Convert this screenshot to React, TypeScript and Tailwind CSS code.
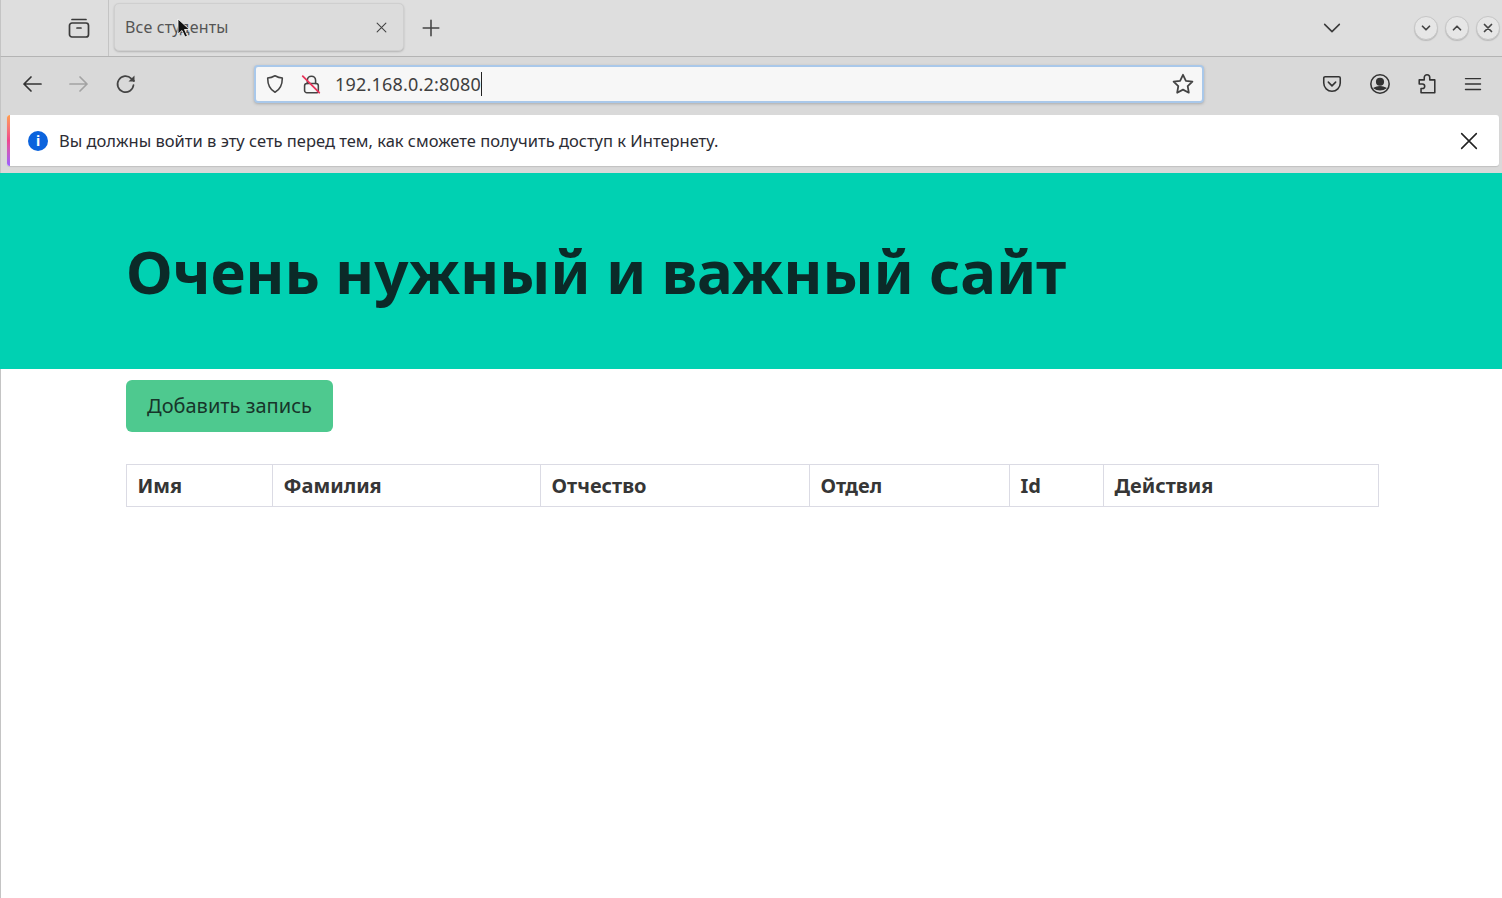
const ui = { fontFamily: '"Noto Sans", sans-serif' };

function Ic({ children, className = "" }: { children: React.ReactNode; className?: string }) {
  return (
    <svg viewBox="0 0 24 24" fill="none" stroke="currentColor" strokeWidth="1.7" strokeLinecap="round" strokeLinejoin="round" className={className}>
      {children}
    </svg>
  );
}

function WinBtn({ children }: { children: React.ReactNode }) {
  return (
    <div className="w-[24px] h-[24px] rounded-full bg-[#e6e6e6] border border-[#c6c6c6] shadow-[0_1px_1px_#bbb] flex items-center justify-center text-[#444]">
      {children}
    </div>
  );
}

const cols: [string, string][] = [
  ["Имя", "w-[146px]"],
  ["Фамилия", "w-[268px]"],
  ["Отчество", "w-[269px]"],
  ["Отдел", "w-[200px]"],
  ["Id", "w-[94px]"],
  ["Действия", "flex-1"],
];

export default function App() {
  return (
    <div className="relative w-[1502px] h-[898px] overflow-hidden bg-white flex flex-col" style={ui}>
      {/* tab strip */}
      <div className="h-[57px] bg-[#dedede] border-l border-l-[#c4c4c4] border-b border-b-[#b4b4b4] flex items-center">
        <div className="w-[108px] h-full border-r border-[#c4c4c4] flex items-center justify-end pr-[17px] text-[#3a3a3a]">
          <Ic className="w-[24px] h-[24px]">
            <rect x="2.5" y="7" width="19" height="14" rx="2.5" />
            <path d="M5 3.5h14M10 12h4" />
          </Ic>
        </div>
        <div className="ml-[5px] mb-[2px] w-[290px] h-[48px] rounded-[5px] bg-[#dcdcdc] border border-[#cfcfcf] shadow-[0_1px_2px_#b4b4b4] flex items-center pl-[10px] pr-[14px]">
          <span className="text-[16px] tracking-[0.15px] text-[#555] flex-1">Все студенты</span>
          <Ic className="w-[15px] h-[15px] text-[#444]"><path d="M5 5l14 14M19 5L5 19" /></Ic>
        </div>
        <Ic className="ml-[16px] w-[22px] h-[22px] text-[#444]"><path d="M12 3.5v17M3.5 12h17" /></Ic>
        <div className="flex-1" />
        <Ic className="w-[22px] h-[22px] text-[#3a3a3a] mr-[71px]"><path d="M4 8l8 8 8-8" /></Ic>
        <div className="flex gap-[7px] mr-[2px]">
          <WinBtn><Ic className="w-[14px] h-[14px]"><path d="M6 9l6 6 6-6" strokeWidth="3" /></Ic></WinBtn>
          <WinBtn><Ic className="w-[14px] h-[14px]"><path d="M6 15l6-6 6 6" strokeWidth="3" /></Ic></WinBtn>
          <WinBtn><Ic className="w-[14px] h-[14px]"><path d="M6 6l12 12M18 6L6 18" strokeWidth="3" /></Ic></WinBtn>
        </div>
      </div>

      {/* nav bar */}
      <div className="h-[54px] bg-[#d9d9d9] border-l border-[#c4c4c4] flex items-center">
        <Ic className="ml-[19px] w-[24px] h-[24px] text-[#333]"><path d="M21 12H4M11 5l-7 7 7 7" /></Ic>
        <Ic className="ml-[23px] w-[24px] h-[24px] text-[#a3a3a3]"><path d="M3 12h17M13 5l7 7-7 7" /></Ic>
        <Ic className="ml-[23px] w-[24px] h-[24px] text-[#444]">
          <path d="M19.5 13a8 8 0 1 1-2.2-6.4L20 9" />
          <path d="M20.5 3.5V9.5H14.5" fill="currentColor" stroke="none" />
        </Ic>
        <div className="ml-[116px] w-[950px] h-[38px] rounded-[4px] bg-[#f7f7f7] border-2 border-[#a9c8ea] shadow-[0_1px_3px_#aaa] flex items-center pl-[8px] pr-[7px]">
          <Ic className="w-[22px] h-[22px] text-[#444]">
            <path d="M12 3c3 1.6 5.6 2.3 8 2.5 0 7.5-2.5 12.7-8 15.5C6.500 18.200 4 13 4 5.500 6.400 5.300 9 4.600 12 3z" />
          </Ic>
          <svg viewBox="0 0 24 24" fill="none" className="ml-[14px] w-[22px] h-[22px]" strokeWidth="1.7" strokeLinecap="round">
            <rect x="5" y="11.500" width="15" height="10" rx="2.500" stroke="#444" />
            <path d="M8 11.500V8a4.500 4.500 0 0 1 9 0v3.500" stroke="#444" />
            <path d="M3 3.500l18 18" stroke="#e8345a" strokeWidth="2" />
          </svg>
          <span className="ml-[13px] text-[18px] tracking-[0.2px] text-[#3f3f3f] leading-none">192.168.0.2:8080</span>
          <span className="w-px h-[24px] bg-[#222]" />
          <div className="flex-1" />
          <svg viewBox="0 0 24 24" fill="none" stroke="#444" strokeWidth="1.800" strokeLinejoin="round" className="w-[24px] h-[24px]">
            <path d="M12 2.800l2.900 6 6.500.9-4.700 4.500 1.100 6.500-5.800-3.100-5.800 3.100 1.100-6.500-4.700-4.500 6.500-.9z" />
          </svg>
        </div>
        <div className="flex-1" />
        <Ic className="w-[22px] h-[22px] text-[#333] mr-[26px]">
          <path d="M4.500 4h15A1.500 1.500 0 0 1 21 5.500V11a9 9 0 0 1-18 0V5.500A1.500 1.500 0 0 1 4.500 4z" />
          <path d="M8 10l4 4 4-4" />
        </Ic>
        <svg viewBox="0 0 24 24" fill="none" stroke="#333" strokeWidth="1.700" className="w-[22px] h-[22px] mr-[25px]">
          <circle cx="12" cy="12" r="10" />
          <circle cx="12" cy="9.500" r="3.600" fill="#333" />
          <path d="M6 16.500c3-2 9-2 12 0-3 2.400-9 2.400-12 0z" fill="#333" />
        </svg>
        <Ic className="w-[22px] h-[22px] text-[#333] mr-[25px]">
          <path d="M9 7.500V5a3 3 0 0 1 6 0v2.500h5.500v14h-15V17H7a2.500 2.500 0 0 0 0-5H3.500V7.500z" />
        </Ic>
        <Ic className="w-[20px] h-[20px] text-[#333] mr-[19px]"><path d="M3 5.500h18M3 12h18M3 18.500h18" /></Ic>
      </div>

      {/* notification */}
      <div className="h-[62px] bg-[#d9d9d9] border-l border-[#c4c4c4] pt-[4px] pl-[6px] pr-[3px]">
        <div className="relative h-[51px] bg-white rounded-[3px] shadow-[0_1px_1px_#c0c0c0] flex items-center overflow-hidden">
          <div className="w-[3px] h-full bg-gradient-to-b from-[#ff9d4d] via-[#f0468c] to-[#9b5cff]" />
          <div className="ml-[18px] w-[20px] h-[20px] rounded-full bg-[#0b63dd] text-white flex items-center justify-center text-[14px] font-bold leading-none">i</div>
          <span className="ml-[11px] pt-[2px] text-[16.5px] text-[#2c2c34]">Вы должны войти в эту сеть перед тем, как сможете получить доступ к Интернету.</span>
          <div className="flex-1" />
          <Ic className="w-[22px] h-[22px] text-[#222] mr-[19px]"><path d="M4 4l16 16M20 4L4 20" /></Ic>
        </div>
      </div>

      {/* hero */}
      <div className="h-[196px] bg-[#00d1b2] flex items-center pl-[126px]">
        <h1 className="text-[60px] font-bold leading-none tracking-[-0.2px] text-[#0b2a28]">Очень нужный и важный сайт</h1>
      </div>

      {/* content */}
      <div className="flex-1 border-l border-[#c4c4c4] pl-[125px] pr-[123px] pt-[11px]">
        <div className="w-[207px] h-[52px] rounded-[6px] bg-[#4ec98f] flex items-center justify-center text-[20px] text-[#17352a]">Добавить запись</div>
        <div className="mt-[32px] h-[43px] border border-[#dbdbe4] flex text-[#363636]">
          {cols.map(([label, w], i) => (
            <div key={label} className={`${w} flex items-center pl-[10.5px] font-bold text-[20px] ${i < 5 ? "border-r border-[#dbdbe4]" : ""}`}>
              {label}
            </div>
          ))}
        </div>
      </div>

      {/* mouse pointer */}
      <svg viewBox="0 0 14 22" className="absolute left-[177px] top-[18px] w-[14px] h-[22px]">
        <path d="M1 1v15l4-3.500 3 6.500 2.500-1-3-6.500h5z" fill="#111" stroke="#fff" strokeWidth="0.800" />
      </svg>
    </div>
  );
}
